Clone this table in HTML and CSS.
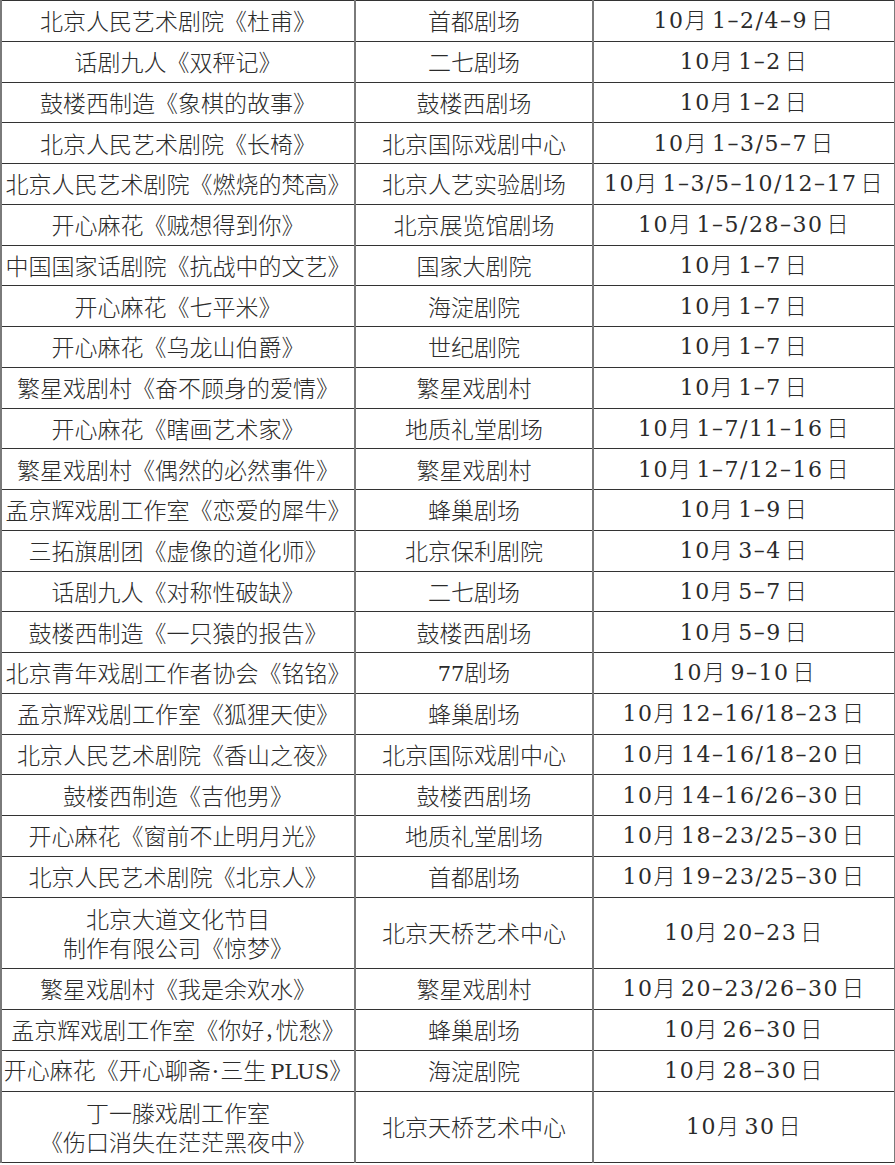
FILE: index.html
```html
<!DOCTYPE html>
<html lang="zh-CN">
<head>
<meta charset="utf-8">
<title>十月演出</title>
<link rel="stylesheet" href="styles.css">
</head>
<body>
<table class="sched">
<colgroup><col class="c1"><col class="c2"><col class="c3"></colgroup>
<tbody>
<tr><td>北京人民艺术剧院《杜甫》</td><td>首都剧场</td><td>10月<span class="d">1–2/4–9</span>日</td></tr>
<tr><td>话剧九人《双秤记》</td><td>二七剧场</td><td>10月<span class="d">1–2</span>日</td></tr>
<tr><td>鼓楼西制造《象棋的故事》</td><td>鼓楼西剧场</td><td>10月<span class="d">1–2</span>日</td></tr>
<tr><td>北京人民艺术剧院《长椅》</td><td>北京国际戏剧中心</td><td>10月<span class="d">1–3/5–7</span>日</td></tr>
<tr><td>北京人民艺术剧院《燃烧的梵高》</td><td>北京人艺实验剧场</td><td>10月<span class="d">1–3/5–10/12–17</span>日</td></tr>
<tr><td>开心麻花《贼想得到你》</td><td>北京展览馆剧场</td><td>10月<span class="d">1–5/28–30</span>日</td></tr>
<tr><td>中国国家话剧院《抗战中的文艺》</td><td>国家大剧院</td><td>10月<span class="d">1–7</span>日</td></tr>
<tr><td>开心麻花《七平米》</td><td>海淀剧院</td><td>10月<span class="d">1–7</span>日</td></tr>
<tr><td>开心麻花《乌龙山伯爵》</td><td>世纪剧院</td><td>10月<span class="d">1–7</span>日</td></tr>
<tr><td>繁星戏剧村《奋不顾身的爱情》</td><td>繁星戏剧村</td><td>10月<span class="d">1–7</span>日</td></tr>
<tr><td>开心麻花《瞎画艺术家》</td><td>地质礼堂剧场</td><td>10月<span class="d">1–7/11–16</span>日</td></tr>
<tr><td>繁星戏剧村《偶然的必然事件》</td><td>繁星戏剧村</td><td>10月<span class="d">1–7/12–16</span>日</td></tr>
<tr><td>孟京辉戏剧工作室《恋爱的犀牛》</td><td>蜂巢剧场</td><td>10月<span class="d">1–9</span>日</td></tr>
<tr><td>三拓旗剧团《虚像的道化师》</td><td>北京保利剧院</td><td>10月<span class="d">3–4</span>日</td></tr>
<tr><td>话剧九人《对称性破缺》</td><td>二七剧场</td><td>10月<span class="d">5–7</span>日</td></tr>
<tr><td>鼓楼西制造《一只猿的报告》</td><td>鼓楼西剧场</td><td>10月<span class="d">5–9</span>日</td></tr>
<tr><td>北京青年戏剧工作者协会《铭铭》</td><td><span class="lat">77</span>剧场</td><td>10月<span class="d">9–10</span>日</td></tr>
<tr><td>孟京辉戏剧工作室《狐狸天使》</td><td>蜂巢剧场</td><td>10月<span class="d">12–16/18–23</span>日</td></tr>
<tr><td>北京人民艺术剧院《香山之夜》</td><td>北京国际戏剧中心</td><td>10月<span class="d">14–16/18–20</span>日</td></tr>
<tr><td>鼓楼西制造《吉他男》</td><td>鼓楼西剧场</td><td>10月<span class="d">14–16/26–30</span>日</td></tr>
<tr><td>开心麻花《窗前不止明月光》</td><td>地质礼堂剧场</td><td>10月<span class="d">18–23/25–30</span>日</td></tr>
<tr><td>北京人民艺术剧院《北京人》</td><td>首都剧场</td><td>10月<span class="d">19–23/25–30</span>日</td></tr>
<tr class="tall"><td>北京大道文化节目<br>制作有限公司《惊梦》</td><td>北京天桥艺术中心</td><td>10月<span class="d">20–23</span>日</td></tr>
<tr class="r2"><td>繁星戏剧村《我是余欢水》</td><td>繁星戏剧村</td><td>10月<span class="d">20–23/26–30</span>日</td></tr>
<tr class="r2"><td>孟京辉戏剧工作室《你好<span class="p">，</span>忧愁》</td><td>蜂巢剧场</td><td>10月<span class="d">26–30</span>日</td></tr>
<tr class="r2"><td>开心麻花《开心聊斋<span class="dot">·</span>三生<span class="lat pl">PLUS</span>》</td><td>海淀剧院</td><td>10月<span class="d">28–30</span>日</td></tr>
<tr class="tall"><td>丁一滕戏剧工作室<br>《伤口消失在茫茫黑夜中》</td><td>北京天桥艺术中心</td><td>10月<span class="d">30</span>日</td></tr>
</tbody>
</table>
</body>
</html>
```

FILE: styles.css
```css
html, body {
  margin: 0;
  padding: 0;
  background: #fff;
}

.sched {
  border-collapse: collapse;
  table-layout: fixed;
  width: 894px;
  margin: 0;
  font-family: "Noto Sans CJK SC", sans-serif;
  font-size: 23px;
  font-weight: 300;
  color: #2b2b2b;
}

.c1 { width: 354px; }
.c2 { width: 238px; }
.c3 { width: 302px; }

.sched td {
  height: 39.75px;
  padding: 0;
  text-align: center;
  vertical-align: middle;
  line-height: 29px;
  white-space: nowrap;
  border-top: 1.5px solid #333;
  border-bottom: 1.5px solid #333;
  border-left: 2px solid #7a7a7a;
  border-right: 2px solid #7a7a7a;
}

.sched td:nth-child(3) {
  font-family: "DejaVu Serif", "Noto Sans CJK SC", sans-serif;
  font-size: 22px;
  letter-spacing: 1.5px;
}

.sched tr.tall td {
  height: 70.2px;
}

.sched tr.r2 td {
  height: 40px;
}

.d {
  padding: 0 3px 0 4px;
}

.lat {
  font-family: "DejaVu Serif", serif;
  font-size: 21px;
}

.pl {
  padding-left: 4px;
}

.dot {
  font-family: "DejaVu Serif", serif;
  padding: 0 1px;
}

.p {
  font-feature-settings: "halt";
}
```
